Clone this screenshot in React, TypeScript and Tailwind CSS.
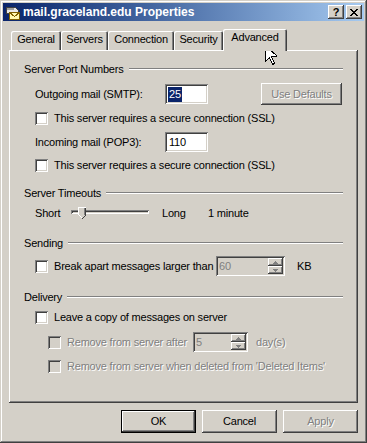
import React from "react";

const raised =
  "shadow-[inset_-1px_-1px_#404040,inset_1px_1px_#ffffff,inset_-2px_-2px_#808080]";
const sunken =
  "shadow-[inset_1px_1px_#808080,inset_-1px_-1px_#ffffff,inset_2px_2px_#404040,inset_-2px_-2px_#d4d0c8]";
const dimText = "text-[#808080] [text-shadow:1px_1px_0_#ffffff]";

const Check = ({ disabled }: { disabled?: boolean }) => (
  <span
    className={`block w-[13px] h-[13px] shrink-0 ${disabled ? "bg-[#d4d0c8]" : "bg-white"} ${sunken}`}
  />
);

const GroupTitle = ({ title, mt }: { title: string; mt: string }) => (
  <div className={`flex items-center h-[14px] ${mt}`}>
    <span>{title}</span>
    <div className="ml-[5px] flex-1 h-[2px] border-t border-t-[#808080] border-b border-b-white" />
  </div>
);

const Spinner = () => (
  <div className="flex flex-col shrink-0 w-[15px] h-[16px] my-[2px] mr-[2px]">
    {[0, 1].map((i) => (
      <div
        key={i}
        className={`h-[8px] flex items-center justify-center bg-[#d4d0c8] ${raised}`}
      >
        <svg width="5" height="3" viewBox="0 0 5 3" shapeRendering="crispEdges">
          {i === 0 ? (
            <path d="M2 0h1v1h1v1h1v1H0V2h1V1h1z" fill="#808080" />
          ) : (
            <path d="M0 0h5v1H4v1H3v1H2V2H1V1H0z" fill="#808080" />
          )}
        </svg>
      </div>
    ))}
  </div>
);

const Tab = ({ label, w, active }: { label: string; w: string; active?: boolean }) =>
  active ? (
    <div
      className={`relative z-10 ${w} h-[22px] -mb-px bg-[#d4d0c8] rounded-t-[2px] flex justify-center pt-[3px] shadow-[inset_1px_1px_#ffffff,inset_-1px_0_#404040,inset_-2px_0_#808080]`}
    >
      {label}
    </div>
  ) : (
    <div
      className={`${w} h-[19px] rounded-t-[2px] flex justify-center pt-[3px] shadow-[inset_1px_1px_#ffffff,inset_-1px_0_#404040,inset_-2px_0_#808080]`}
    >
      {label}
    </div>
  );

const Button = ({ label, def, disabled }: { label: string; def?: boolean; disabled?: boolean }) => (
  <div
    className={`w-[75px] h-[23px] flex items-center justify-center bg-[#d4d0c8] ${
      def
        ? "shadow-[inset_0_0_0_1px_#000000,inset_-2px_-2px_#404040,inset_2px_2px_#ffffff,inset_-3px_-3px_#808080]"
        : raised
    } ${disabled ? dimText : ""}`}
  >
    {label}
  </div>
);

export default function App() {
  return (
    <div className="font-['Liberation_Sans',Arial,sans-serif] text-[11px] tracking-[-0.2px] text-black leading-none whitespace-nowrap">
      <div className="relative w-[367px] h-[443px] bg-[#d4d0c8] p-[3px] shadow-[inset_-1px_-1px_#404040,inset_1px_1px_#d4d0c8,inset_-2px_-2px_#808080,inset_2px_2px_#ffffff] overflow-hidden">
        {/* title bar */}
        <div className="h-[18px] flex items-center px-[2px] bg-gradient-to-r from-[#0a246a] to-[#a6caf0]">
          <svg width="16" height="16" viewBox="0 0 16 16" shapeRendering="crispEdges">
            <path d="M2 3h8l3 3v3H1V6z" fill="#e8e8e8" stroke="#404040" strokeWidth="1" />
            <path d="M2 4h7v2H2z" fill="#a0a0a0" />
            <rect x="4.5" y="8.5" width="10" height="7" fill="#fff8b0" stroke="#806000" />
            <path d="M4.5 8.5l5 4 5-4" fill="none" stroke="#806000" />
          </svg>
          <span className="ml-[2px] text-white font-bold text-[12px] tracking-[0px]">
            mail.graceland.edu Properties
          </span>
          <div className="ml-auto flex gap-[2px]">
            <div className={`w-[16px] h-[14px] bg-[#d4d0c8] flex items-center justify-center font-bold text-[11px] ${raised}`}>
              ?
            </div>
            <div className={`w-[16px] h-[14px] bg-[#d4d0c8] flex items-center justify-center ${raised}`}>
              <svg width="8" height="7" viewBox="0 0 8 7" shapeRendering="crispEdges">
                <path d="M0 0h2v1h1v1h2V1h1V0h2v1H7v1H6v1H5v1h1v1h1v1h1v1H6V6H5V5H3v1H2v1H0V6h1V5h1V4h1V3H2V2H1V1H0z" fill="#000" />
              </svg>
            </div>
          </div>
        </div>

        {/* tabs */}
        <div className="flex items-end h-[21px] mt-[8px] ml-[8px]">
          <Tab label="General" w="w-[50px]" />
          <Tab label="Servers" w="w-[47px]" />
          <Tab label="Connection" w="w-[66px]" />
          <Tab label="Security" w="w-[49px]" />
          <Tab label="Advanced" w="w-[64px]" active />
        </div>

        {/* panel */}
        <div className="ml-[6px] w-[349px] h-[353px] pt-[12px] pl-[15px] pr-[15px] shadow-[inset_-1px_-1px_#404040,inset_1px_1px_#ffffff,inset_-2px_-2px_#808080] flex flex-col">
          <GroupTitle title="Server Port Numbers" mt="mt-0" />

          <div className="flex items-center h-[20px] mt-[8px] ml-[11px]">
            <span className="w-[130px]">Outgoing mail (SMTP):</span>
            <div className={`w-[43px] h-[20px] bg-white flex items-center pl-[3px] ${sunken}`}>
              <span className="bg-[#0a246a] text-white px-[1px] py-[2px]">25</span>
            </div>
            <div className={`ml-[53px] w-[81px] h-[22px] flex items-center justify-center ${raised} ${dimText}`}>
              Use Defaults
            </div>
          </div>

          <div className="flex items-center h-[13px] mt-[8px] ml-[11px]">
            <Check />
            <span className="ml-[6px]">This server requires a secure connection (SSL)</span>
          </div>

          <div className="flex items-center h-[20px] mt-[7px] ml-[11px]">
            <span className="w-[130px]">Incoming mail (POP3):</span>
            <div className={`w-[43px] h-[20px] bg-white flex items-center pl-[4px] ${sunken}`}>110</div>
          </div>

          <div className="flex items-center h-[13px] mt-[7px] ml-[11px]">
            <Check />
            <span className="ml-[6px]">This server requires a secure connection (SSL)</span>
          </div>

          <GroupTitle title="Server Timeouts" mt="mt-[14px]" />

          <div className="flex items-center h-[16px] mt-[5px] ml-[11px]">
            <span className="w-[36px]">Short</span>
            <div className="relative w-[78px] h-[16px]">
              <div className="mt-[5px] h-[4px] bg-[#d4d0c8] shadow-[inset_1px_1px_#808080,inset_-1px_-1px_#ffffff,inset_2px_2px_#404040]" />
              <svg
                className="absolute left-[7px] top-[2px]"
                width="9"
                height="12"
                viewBox="0 0 9 12"
                shapeRendering="crispEdges"
              >
                <path d="M0 0h8v8l-4 4-4-4z" fill="#d4d0c8" />
                <path d="M0 0h8v1H1v7H0z" fill="#ffffff" />
                <path d="M7 1h1v7H7z" fill="#404040" />
                <path d="M6 1h1v7H6z" fill="#808080" />
                <path d="M7 8h1v1H7zM6 9h1v1H6zM5 10h1v1H5zM4 11h1v1H4z" fill="#404040" />
                <path d="M1 8h1v1H1zM2 9h1v1H2zM3 10h1v1H3z" fill="#ffffff" />
              </svg>
            </div>
            <span className="ml-[13px] w-[46px]">Long</span>
            <span>1 minute</span>
          </div>

          <GroupTitle title="Sending" mt="mt-[15px]" />

          <div className="flex items-center h-[20px] mt-[6px] ml-[11px]">
            <Check />
            <span className="ml-[6px] w-[162px] shrink-0">Break apart messages larger than</span>
            <div className={`w-[69px] h-[20px] shrink-0 bg-[#d4d0c8] flex items-center justify-between pl-[3px] ${sunken}`}>
              <span className="text-[#808080]">60</span>
              <Spinner />
            </div>
            <span className="ml-[12px]">KB</span>
          </div>

          <GroupTitle title="Delivery" mt="mt-[14px]" />

          <div className="flex items-center h-[13px] mt-[7px] ml-[11px]">
            <Check />
            <span className="ml-[6px]">Leave a copy of messages on server</span>
          </div>

          <div className="flex items-center h-[20px] mt-[8px] ml-[24px]">
            <Check disabled />
            <span className={`ml-[6px] w-[126px] shrink-0 ${dimText}`}>Remove from server after</span>
            <div className={`w-[55px] h-[20px] shrink-0 bg-[#d4d0c8] flex items-center justify-between pl-[3px] ${sunken}`}>
              <span className="text-[#808080]">5</span>
              <Spinner />
            </div>
            <span className={`ml-[8px] ${dimText}`}>day(s)</span>
          </div>

          <div className="flex items-center h-[13px] mt-[8px] ml-[24px]">
            <Check disabled />
            <span className={`ml-[6px] ${dimText}`}>Remove from server when deleted from 'Deleted Items'</span>
          </div>
        </div>

        {/* buttons */}
        <div className="flex gap-[6px] mt-[7px] ml-[118px]">
          <Button label="OK" def />
          <Button label="Cancel" />
          <Button label="Apply" disabled />
        </div>

        {/* mouse cursor */}
        <svg
          className="absolute left-[265px] top-[45px]"
          width="12"
          height="20"
          viewBox="0 0 12 20"
          shapeRendering="crispEdges"
        >
          <path d="M0.5 0.5v16l4-4 3 7 2-1-3-7h6z" fill="#ffffff" stroke="#000000" strokeWidth="1" />
        </svg>
      </div>
    </div>
  );
}
